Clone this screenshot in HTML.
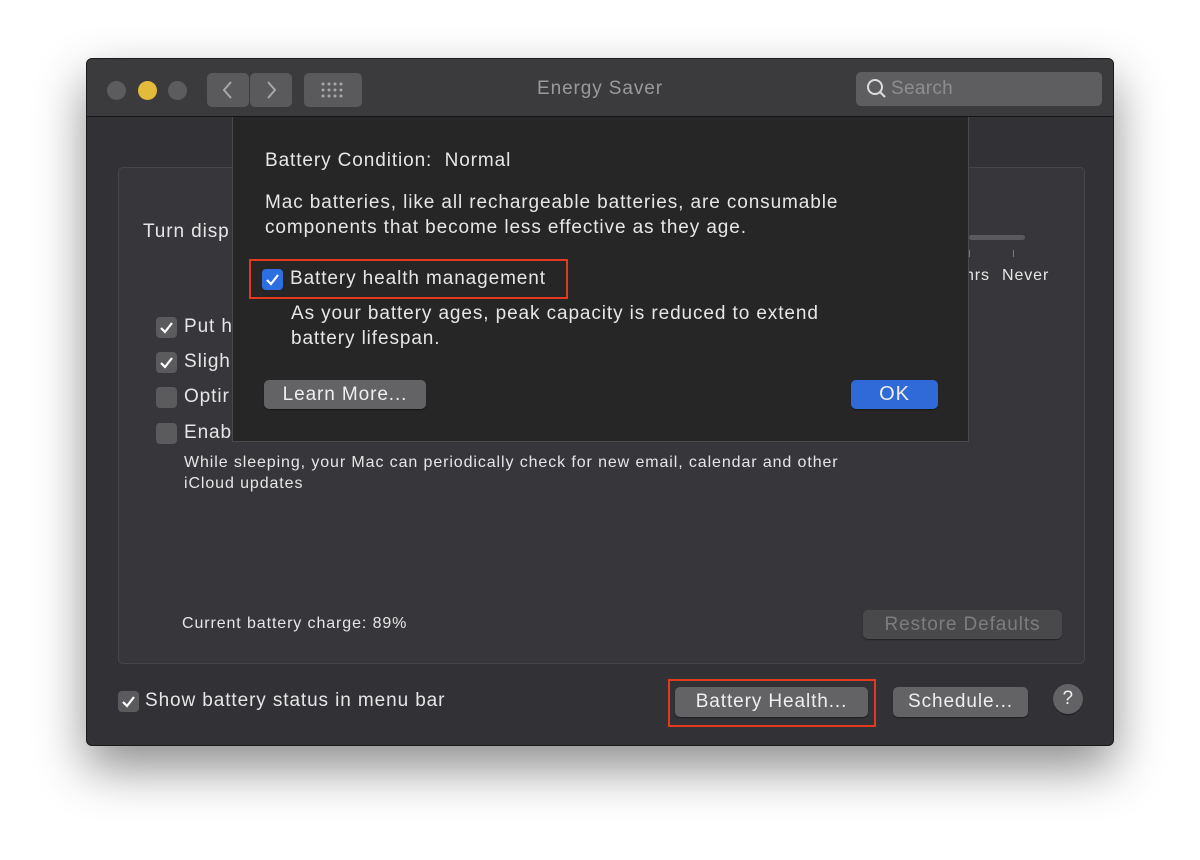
<!DOCTYPE html>
<html><head><meta charset="utf-8"><style>
*{box-sizing:border-box;margin:0;padding:0}
body{width:1200px;height:860px;background:#fff;font-family:"Liberation Sans",sans-serif;position:relative;overflow:hidden;color:#e6e6e6;letter-spacing:0.9px}
.win{position:absolute;left:86px;top:58px;width:1028px;height:688px;background:#323236;border:1px solid #1a1a1a;border-radius:6px;box-shadow:0 22px 50px rgba(0,0,0,.45);overflow:hidden}
.tb{position:absolute;left:0;top:0;width:100%;height:58px;background:#3b3b3e;border-bottom:1px solid #151515}
.dot{position:absolute;top:22px;width:19px;height:19px;border-radius:50%;background:#5c5c5f}
.btn{position:absolute;background:#5a5a5d;border-radius:5px}
.title{position:absolute;left:0;right:0;top:19px;text-align:center;font-size:19px;color:#9a9a9c}
.abs{position:absolute;white-space:nowrap}
.cb{position:absolute;width:21px;height:21px;border-radius:4px;background:#5b5b5e}
.cb svg{position:absolute;left:3px;top:3px}
.panel{position:absolute;left:31px;top:108px;width:967px;height:497px;border:1px solid #47474a;border-radius:5px;background:#37373b}
.sheet{position:absolute;left:145px;top:58px;width:737px;height:325px;background:#262626;border:1px solid #4a4a4a;border-top:none}
.pb{position:absolute;background:#636366;border-radius:5px;text-align:center;color:#eee;font-size:19px;box-shadow:0 1px 1px rgba(0,0,0,.4)}
</style></head><body>
<div class="win">
 <div class="tb">
  <div class="dot" style="left:20px"></div>
  <div class="dot" style="left:51px;background:#e3bb3b"></div>
  <div class="dot" style="left:81px"></div>
  <div class="btn" style="left:120px;top:14px;width:42px;height:34px"><svg width="42" height="34"><path d="M24 9 L17 17 L24 25" stroke="#a8a8aa" stroke-width="2" fill="none"/></svg></div>
  <div class="btn" style="left:163px;top:14px;width:42px;height:34px"><svg width="42" height="34"><path d="M18 9 L25 17 L18 25" stroke="#a8a8aa" stroke-width="2" fill="none"/></svg></div>
  <div class="btn" style="left:217px;top:14px;width:58px;height:34px"><svg width="58" height="34"><g fill="#a8a8aa"><circle cx="19" cy="11" r="1.5"/><circle cx="25" cy="11" r="1.5"/><circle cx="31" cy="11" r="1.5"/><circle cx="37" cy="11" r="1.5"/><circle cx="19" cy="17" r="1.5"/><circle cx="25" cy="17" r="1.5"/><circle cx="31" cy="17" r="1.5"/><circle cx="37" cy="17" r="1.5"/><circle cx="19" cy="23" r="1.5"/><circle cx="25" cy="23" r="1.5"/><circle cx="31" cy="23" r="1.5"/><circle cx="37" cy="23" r="1.5"/></g></svg></div>
  <div class="title">Energy Saver</div>
  <div class="btn" style="left:769px;top:13px;width:246px;height:34px;background:#5e5e61"><svg width="30" height="34" style="position:absolute;left:6px;top:0"><circle cx="13" cy="15" r="7" stroke="#ddd" stroke-width="2" fill="none"/><path d="M18 20 L23 25" stroke="#ddd" stroke-width="2"/></svg><span class="abs" style="left:35px;top:6px;font-size:19px;color:#8e8e90;letter-spacing:0.3px">Search</span></div>
 </div>
 <div class="panel">
  <div style="position:absolute;left:850px;top:67px;width:56px;height:5px;border-radius:3px;background:#5a5a5d"></div>
  <div style="position:absolute;left:850px;top:82px;width:1px;height:7px;background:#777"></div>
  <div style="position:absolute;left:894px;top:82px;width:1px;height:7px;background:#777"></div>
  <span class="abs" style="left:846px;top:99px;font-size:16px">hrs</span>
  <span class="abs" style="left:883px;top:99px;font-size:16px">Never</span>
 </div>
 <span class="abs" style="left:56px;top:162px;font-size:19px">Turn disp</span>
 <div class="cb" style="left:69px;top:258px"><svg width="15" height="15"><path d="M2 8 L6 12 L13 3" stroke="#fff" stroke-width="2.2" fill="none"/></svg></div><span class="abs" style="left:97px;top:257px;font-size:19px">Put h</span>
 <div class="cb" style="left:69px;top:293px"><svg width="15" height="15"><path d="M2 8 L6 12 L13 3" stroke="#fff" stroke-width="2.2" fill="none"/></svg></div><span class="abs" style="left:97px;top:292px;font-size:19px">Sligh</span>
 <div class="cb" style="left:69px;top:328px"></div><span class="abs" style="left:97px;top:327px;font-size:19px">Optir</span>
 <div class="cb" style="left:69px;top:364px"></div><span class="abs" style="left:97px;top:363px;font-size:19px">Enab</span>
 <div class="abs" style="left:97px;top:393px;font-size:16px;line-height:21px">While sleeping, your Mac can periodically check for new email, calendar and other<br>iCloud updates</div>
 <span class="abs" style="left:95px;top:556px;font-size:16px">Current battery charge: 89%</span>
 <div class="pb" style="left:776px;top:551px;width:199px;height:29px;line-height:29px;background:#49494c;color:#7d7d80">Restore Defaults</div>
 <div class="cb" style="left:31px;top:632px"><svg width="15" height="15"><path d="M2 8 L6 12 L13 3" stroke="#fff" stroke-width="2.2" fill="none"/></svg></div>
 <span class="abs" style="left:58px;top:631px;font-size:19px">Show battery status in menu bar</span>
 <div style="position:absolute;left:581px;top:620px;width:208px;height:48px;border:2px solid #e2391f"></div>
 <div class="pb" style="left:588px;top:628px;width:193px;height:30px;line-height:30px">Battery Health...</div>
 <div class="pb" style="left:806px;top:628px;width:135px;height:30px;line-height:30px">Schedule...</div>
 <div class="pb" style="left:966px;top:625px;width:30px;height:30px;border-radius:50%;line-height:30px;font-size:19px;letter-spacing:0.5px">?</div>
 <div class="sheet">
  <span class="abs" style="left:32px;top:33px;font-size:19px">Battery Condition:&nbsp; Normal</span>
  <div class="abs" style="left:32px;top:73px;font-size:19px;line-height:25px">Mac batteries, like all rechargeable batteries, are consumable<br>components that become less effective as they age.</div>
  <div style="position:absolute;left:16px;top:142px;width:319px;height:40px;border:2px solid #e2391f"></div>
  <div class="cb" style="left:29px;top:152px;background:#2d6ee0"><svg width="15" height="15"><path d="M2 8 L6 12 L13 3" stroke="#fff" stroke-width="2.2" fill="none"/></svg></div>
  <span class="abs" style="left:57px;top:151px;font-size:19px">Battery health management</span>
  <div class="abs" style="left:58px;top:184px;font-size:19px;line-height:25px">As your battery ages, peak capacity is reduced to extend<br>battery lifespan.</div>
  <div class="pb" style="left:31px;top:263px;width:162px;height:29px;line-height:29px">Learn More...</div>
  <div class="pb" style="left:618px;top:263px;width:87px;height:29px;line-height:29px;background:#2f6ad8;font-size:20px">OK</div>
 </div>
</div>
</body></html>
